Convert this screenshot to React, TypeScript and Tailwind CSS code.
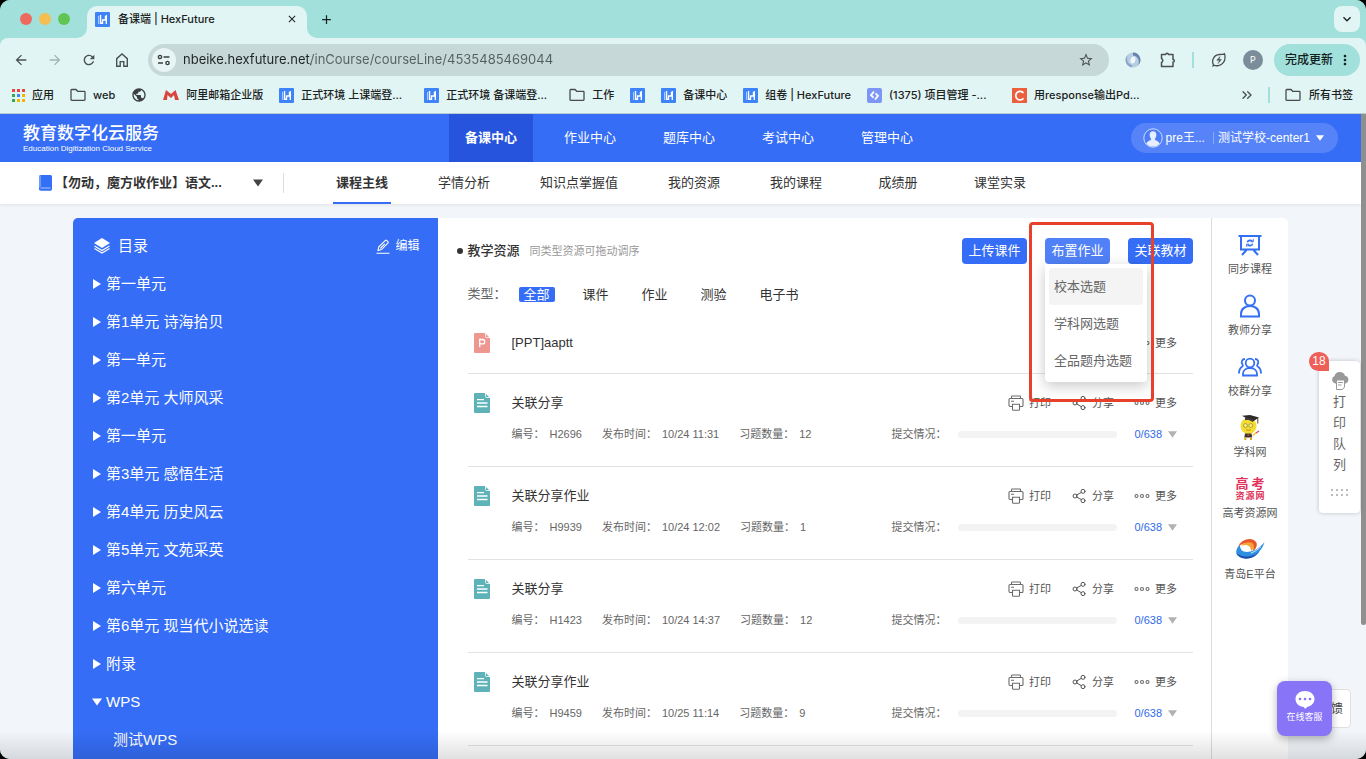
import React from 'react'
import { ChevronsRight, Share2 } from 'lucide-react'
import { MdAdd, MdArrowBack, MdArrowForward, MdClose, MdKeyboardArrowDown, MdMoreVert, MdPublic, MdRefresh, MdStarBorder } from 'react-icons/md'
import { clsx } from 'clsx'

const UI_FONT = "font-['Inter','Noto_Sans_CJK_SC',sans-serif]"
const PAGE_FONT = "font-['Liberation_Sans','Noto_Sans_CJK_SC',sans-serif]"

interface Bookmark {
  label?: string
  icon: React.ReactNode
  name?: string
  wide?: boolean
}

interface Chapter {
  title: string
  open?: boolean
  child?: boolean
}

interface Homework {
  title: string
  code: string
  time: string
  count: number
  done: number
  total: number
}

/* ---------- icons ---------- */

const HexIcon = () => (
  <svg viewBox="0 0 15 15" className="size-[15px] shrink-0">
    <rect width="15" height="15" rx="1" fill="#3f83f8" />
    <path d="M3.500 4v8" stroke="#a9cbff" strokeWidth="1" />
    <path d="M5.500 3v9M5 11.300h2.500V8h3V4M11.300 3v9" stroke="#fff" strokeWidth="1.400" fill="none" />
  </svg>
)

const AppsIcon = () => {
  const colors = ['#e8453c', '#e8453c', '#e8453c', '#34a853', '#4285f4', '#f4b400', '#34a853', '#f4b400', '#f4b400']
  return (
    <svg viewBox="0 0 13 13" className="size-[13px] shrink-0">
      {colors.map((c, i) => (
        <rect key={i} x={(i % 3) * 5} y={Math.floor(i / 3) * 5} width="3" height="3" fill={c} />
      ))}
    </svg>
  )
}

const MailIcon = () => (
  <svg viewBox="0 0 16 12" className="h-3 w-4 shrink-0">
    <path d="M0 11L3 1l5 4 4.500-4L16 11h-4l-1-5-3 3-3.500-3L4 11z" fill="#d9453c" />
  </svg>
)

const CodeIcon = () => (
  <svg viewBox="0 0 15 15" className="size-[15px] shrink-0">
    <rect width="15" height="15" rx="2" fill="#7d96f5" />
    <path d="M7 3.500L4 7.200l2.500 2.500M8 11.500l3-3.700-2.500-2.500" stroke="#fff" strokeWidth="1.8" fill="none" />
  </svg>
)

const CIcon = () => (
  <svg viewBox="0 0 15 15" className="size-[15px] shrink-0">
    <rect width="15" height="15" fill="#ec5f3d" />
    <path d="M11.500 5A4.300 4.300 0 1 0 11.500 10.200" stroke="#fff" strokeWidth="1.700" fill="none" />
  </svg>
)

const FolderIcon = () => (
  <svg viewBox="0 0 16 14" className="h-[14px] w-4 shrink-0" fill="none" stroke="#474b4b" strokeWidth="1.300">
    <path d="M1 2.200a.7.7 0 0 1 .7-.7h4.300l1.700 1.800h6.600a.7.7 0 0 1 .7.7v7.600a.7.7 0 0 1-.7.7H1.700a.7.7 0 0 1-.7-.7z" />
  </svg>
)

const HomeIcon = () => (
  <svg viewBox="0 0 14 14" className="size-[14px]" fill="none" stroke="currentColor" strokeWidth="1.400">
    <path d="M1.700 13.200V5.600L7 1l5.300 4.600v7.600H8.800V8.600H5.200v4.600z" />
  </svg>
)

const TuneIcon = () => (
  <svg viewBox="0 0 14 12" className="h-3 w-[14px]" fill="none" stroke="#3b3f3f" strokeWidth="1.400">
    <circle cx="3" cy="3" r="1.600" />
    <path d="M6.500 3h6M1 9h5" />
    <circle cx="10.500" cy="9" r="1.600" />
  </svg>
)

const PuzzleIcon = () => (
  <svg viewBox="0 0 16 16" className="size-4" fill="none" stroke="#4b5050" strokeWidth="1.500">
    <path d="M1.500 2.500h4.300a1.300 1.300 0 0 1 2.600 0h4.600v5a1.300 1.300 0 0 1 0 2.600v4.400H1.500v-4a2.200 2.200 0 0 0 0-4z" strokeLinejoin="round" />
  </svg>
)

const SaverIcon = () => (
  <svg viewBox="0 0 16 16" className="size-4" fill="none" stroke="#4b5050" strokeWidth="1.300">
    <path d="M2.800 13.200C.2 9.500 2 3 8.500 2.500c2 0 3.500 0 5-.8.8 3 .8 6.500-1.200 9-2.500 3.300-7 3.500-9.500 2.500zL1.500 14.500" />
    <path d="M9 4.500L5.800 8.300h2.700L7 11.500l3.500-4H8z" fill="#4b5050" strokeWidth=".5" />
  </svg>
)

const SwirlIcon = () => (
  <svg viewBox="0 0 16 16" className="size-4">
    <circle cx="8" cy="8" r="7.500" fill="#b9cde2" />
    <path d="M8 .5a7.500 7.500 0 0 1 5 13c2-4 1-9-5-10z" fill="#6583ae" />
    <path d="M7 15.500A7.500 7.500 0 0 1 2.500 3C1 8 3 12 7 13z" fill="#88a6cb" />
    <ellipse cx="8" cy="8" rx="2.400" ry="3.600" fill="#eff7fa" transform="rotate(15 8 8)" />
  </svg>
)

const LayersIcon = () => (
  <svg viewBox="0 0 16 16" className="size-4">
    <path d="M8 0l8 5-8 5-8-5z" fill="#fff" />
    <path d="M.5 8L8 12.500 15.500 8M.5 10.500L8 15l7.500-4.500" stroke="#fff" strokeWidth="1.100" fill="none" />
  </svg>
)

const EditIcon = () => (
  <svg viewBox="0 0 14 15" className="h-[15px] w-[14px]" fill="none" stroke="#fff" strokeWidth="1.100">
    <path d="M2 11.500l.8-3.600 6.700-6.600a.8.8 0 0 1 1.100 0l1.500 1.500a.8.8 0 0 1 0 1.100L5.500 10.600zM4.300 9.300l4.500-4.500M.5 14.200h13" />
  </svg>
)

const Triangle = ({ down, className }: { down?: boolean; className?: string }) => (
  <svg viewBox="0 0 10 10" className={clsx('shrink-0', className)} fill="currentColor">
    <path d={down ? 'M0 1.500h10L5 8.500z' : 'M1 0v10l8-5z'} />
  </svg>
)

const FileIcon = ({ kind }: { kind: 'ppt' | 'doc' }) => (
  <svg viewBox="0 0 16 20" className="h-5 w-4 shrink-0">
    <path d="M1 0h10l5 5v14a1 1 0 0 1-1 1H1a1 1 0 0 1-1-1V1a1 1 0 0 1 1-1z" fill={kind === 'ppt' ? '#ee9791' : '#5db3b8'} />
    <path d="M11.500 0v3.500a1 1 0 0 0 1 1H16" stroke="#fff" strokeWidth=".8" fill="none" />
    {kind === 'ppt' ? (
      <path d="M5.700 14V6.500h2.800a2.200 2.200 0 0 1 0 4.400H5.700" stroke="#fff" strokeWidth="1.300" fill="none" />
    ) : (
      <path d="M3 6.700h7M3 10h10.500M3 13.500h10.500" stroke="#fff" strokeWidth="1.300" />
    )}
  </svg>
)

const PrintIcon = () => (
  <svg viewBox="0 0 16 16" className="size-4" fill="none" stroke="#6b6b6b" strokeWidth="1.100">
    <path d="M3.500 3.500V1.800a.8.8 0 0 1 .8-.8h7.400a.8.8 0 0 1 .8.8v1.700M4.500 11.500H2a1 1 0 0 1-1-1V4.500a1 1 0 0 1 1-1h12a1 1 0 0 1 1 1v6a1 1 0 0 1-1 1h-2.500M3 6.200h3" />
    <path d="M4.500 9.200h7v5.300a.8.8 0 0 1-.8.8H5.300a.8.8 0 0 1-.8-.8z" />
  </svg>
)

const DotsIcon = () => (
  <svg viewBox="0 0 16 6" className="h-[6px] w-4" fill="none" stroke="#6b6b6b" strokeWidth="1.100">
    <circle cx="2.500" cy="3" r="1.500" />
    <circle cx="8" cy="3" r="1.500" />
    <circle cx="13.500" cy="3" r="1.500" />
  </svg>
)

const BoardIcon = () => (
  <svg viewBox="0 0 24 22" className="h-[22px] w-6" fill="none" stroke="#3370f5" strokeWidth="2">
    <path d="M.5 2h23M3 2v13.500h18V2M8.500 16l-4.500 5M15.500 16l4.500 5" />
    <path d="M9.300 8.300a3 3 0 0 1 5-1M14.700 9.700a3 3 0 0 1-5 1" strokeWidth="1.600" />
    <path d="M15.300 5.200v2.600h-2.600M8.700 12.800v-2.600h2.600" strokeWidth="1" />
  </svg>
)

const PersonIcon = () => (
  <svg viewBox="0 0 22 24" className="h-6 w-[22px]" fill="none" stroke="#3370f5" strokeWidth="2">
    <circle cx="11" cy="6.500" r="5" />
    <path d="M2 22.500V20c0-5 4-8 9-8s9 3 9 8v2.500z" />
  </svg>
)

const GroupIcon = () => (
  <svg viewBox="0 0 24 20" className="h-5 w-6" fill="none" stroke="#3370f5" strokeWidth="1.800">
    <circle cx="12" cy="6" r="4.300" />
    <path d="M5 18.500v-1.700c0-3.500 3-5.800 7-5.800s7 2.300 7 5.800v1.700z" />
    <path d="M7 2C4 2 2.800 5 4.500 7.500c.8 1 .3 1.800-.5 2.300C2 11 1 13 1 16.500M17 2c3 0 4.200 3 2.500 5.500-.8 1-.3 1.800.5 2.300 2 1.200 3 3.200 3 6.700" />
  </svg>
)

const MascotIcon = () => (
  <svg viewBox="0 0 22 26" className="h-[26px] w-[22px]">
    <circle cx="9.500" cy="11" r="8" fill="#f6dc32" />
    <path d="M3 .800L11 0l9 2.500-6.500 4.200z" fill="#2e2a2a" />
    <path d="M6 2.500v2.800c2.500-.6 5.500-.2 8 1.400V4z" fill="#413b3b" />
    <path d="M18.800 3V8.500" stroke="#55431f" />
    <g fill="#f9ea7f" stroke="#8d8a2e" strokeWidth=".7">
      <circle cx="6.500" cy="10.500" r="2" />
      <circle cx="11.800" cy="10.500" r="2" />
    </g>
    <path d="M7 14.500c1.500 1 3.500 1 5 0" stroke="#a8811a" fill="none" strokeWidth=".8" />
    <path d="M6 18.500h6.500l.7 4H5.300z" fill="#3a3432" />
    <path d="M9.300 18.500l-1.500 2h3z" fill="#d94b2b" />
    <path d="M6.300 22.500V25M12 22.500V25" stroke="#dba91c" strokeWidth="2" />
    <path d="M13.500 20.500l4-3" stroke="#e8c328" strokeWidth="1.300" />
    <path d="M17 18l3-2" stroke="#d94a58" strokeWidth="1.300" />
  </svg>
)

const QingdaoIcon = () => (
  <svg viewBox="0 0 30 24" className="h-6 w-[30px]">
    <path d="M3 9C6 1 17-1.500 21 4c2 3 0 7-3 9 1-4 0-7.500-4-8C10 4.500 6 6 3 9z" fill="#e8562a" />
    <path d="M6 7.500c4-4 11-4 12.500-1 1 2.500-.5 5.500-2.500 6.500 0-3-1-5-4-5.800-2-.4-4 0-6 .3z" fill="#f6a636" />
    <path d="M9 8.500c3-1 6 .5 6 4.500-2 1-4.500 1-6 0-1-1-1-3 0-4.500z" fill="#fff" />
    <path d="M5 7C1 10 0 15 3 18c5 4 14 3 20-3 3-3 5.500-7 6.500-11-3 4-8 8-14 9.500C9 15 5 13 5 7z" fill="#2f8fe0" />
    <path d="M1.500 15c3 7 16 8.500 23-1.500C18 19.500 8 20.500 1.500 15z" fill="#1c4fae" />
    <path d="M16 15c4-1.500 7-3.500 10-6.500" stroke="#fff" strokeWidth=".8" fill="none" />
  </svg>
)

const CloudPrintIcon = () => (
  <svg viewBox="0 0 18 18" className="size-[18px]">
    <path d="M4 11.500A4 4 0 0 1 3.500 4 5.500 5.500 0 0 1 14 3.800a4 4 0 0 1 .8 7.700z" fill="#999" />
    <path d="M5.500 8h8v7l-2 2.500h-6z" fill="#fff" stroke="#999" />
    <path d="M7 10.500h5M7 13h3.500" stroke="#999" />
  </svg>
)

const AvatarIcon = () => (
  <svg viewBox="0 0 20 20" className="size-5 shrink-0">
    <circle cx="10" cy="10" r="9.200" fill="#4c7cf6" stroke="#dbe6ff" strokeWidth=".9" />
    <path d="M10 3.200c2.600 0 3.600 2 3.300 4.500-.2 1.500-1 2.700-1.600 3.300.2 1.700 4 1.700 5 4.700A9.200 9.200 0 0 1 3.300 15.700c1-3 4.800-3 5-4.700-.6-.6-1.400-1.800-1.600-3.300-.3-2.500.7-4.500 3.300-4.500z" fill="#e7efff" />
  </svg>
)

/* ---------- data ---------- */

const bookmarks: Bookmark[] = [
  { label: '应用', icon: <AppsIcon /> },
  { label: 'web', icon: <FolderIcon /> },
  { name: '网站', icon: <MdPublic className="size-4 text-[#3b3f3f]" /> },
  { label: '阿里邮箱企业版', icon: <MailIcon /> },
  { label: '正式环境 上课端登...', icon: <HexIcon />, wide: true },
  { label: '正式环境 备课端登...', icon: <HexIcon />, wide: true },
  { label: '工作', icon: <FolderIcon /> },
  { name: 'HexFuture', icon: <HexIcon /> },
  { label: '备课中心', icon: <HexIcon /> },
  { label: '组卷 | HexFuture', icon: <HexIcon /> },
  { label: '(1375) 项目管理 -...', icon: <CodeIcon />, wide: true },
  { label: '用response输出Pd...', icon: <CIcon />, wide: true }
]

const mainNav = ['备课中心', '作业中心', '题库中心', '考试中心', '管理中心']
const subNav = ['课程主线', '学情分析', '知识点掌握值', '我的资源', '我的课程', '成绩册', '课堂实录']
const types = ['全部', '课件', '作业', '测验', '电子书']
const assignOptions = ['校本选题', '学科网选题', '全品题舟选题']

const chapters: Chapter[] = [
  { title: '第一单元' },
  { title: '第1单元 诗海拾贝' },
  { title: '第一单元' },
  { title: '第2单元 大师风采' },
  { title: '第一单元' },
  { title: '第3单元 感悟生活' },
  { title: '第4单元 历史风云' },
  { title: '第5单元 文苑采英' },
  { title: '第六单元' },
  { title: '第6单元 现当代小说选读' },
  { title: '附录' },
  { title: 'WPS', open: true },
  { title: '测试WPS', child: true }
]

const homeworks: Homework[] = [
  { title: '关联分享', code: 'H2696', time: '10/24 11:31', count: 12, done: 0, total: 638 },
  { title: '关联分享作业', code: 'H9939', time: '10/24 12:02', count: 1, done: 0, total: 638 },
  { title: '关联分享', code: 'H1423', time: '10/24 14:37', count: 12, done: 0, total: 638 },
  { title: '关联分享作业', code: 'H9459', time: '10/25 11:14', count: 9, done: 0, total: 638 }
]

const GaokaoLogo = () => (
  <span className="flex flex-col items-center font-bold text-[#e0325a]">
    <span className="flex gap-[3px] text-[13px] leading-[14px]">
      <span>高</span>
      <span>考</span>
    </span>
    <span className="flex gap-px text-[9px] leading-[11px]">
      <span>资</span>
      <span>源</span>
      <span>网</span>
    </span>
  </span>
)

const tools = [
  { label: '同步课程', icon: <BoardIcon /> },
  { label: '教师分享', icon: <PersonIcon /> },
  { label: '校群分享', icon: <GroupIcon /> },
  { label: '学科网', icon: <MascotIcon /> },
  { label: '高考资源网', icon: <GaokaoLogo /> },
  { label: '青岛E平台', icon: <QingdaoIcon /> }
]

/* ---------- browser window ---------- */

const TabStrip = () => (
  <div className="flex h-[38px] shrink-0 items-end bg-[#a2e0dc] pr-[6px]">
    <div className="flex w-[77px] shrink-0 items-center gap-[7px] self-center pl-5">
      <span className="size-3 rounded-full bg-[#ed6a5e]" />
      <span className="size-3 rounded-full bg-[#f5bf4f]" />
      <span className="size-3 rounded-full bg-[#61c554]" />
    </div>
    <svg viewBox="0 0 10 10" className="size-[10px] shrink-0">
      <path d="M10 0v10H0A10 10 0 0 0 10 0z" fill="#e1f5f4" />
    </svg>
    <div className="flex h-8 w-[220px] shrink-0 items-center rounded-t-[10px] bg-[#e1f5f4] pr-[9px] pb-[6px] pl-2">
      <HexIcon />
      <span className="ml-2 flex-1 truncate text-[11px] font-medium">备课端 | HexFuture</span>
      <button aria-label="关闭标签页">
        <MdClose className="size-3" />
      </button>
    </div>
    <svg viewBox="0 0 10 10" className="size-[10px] shrink-0">
      <path d="M0 0v10h10A10 10 0 0 1 0 0z" fill="#e1f5f4" />
    </svg>
    <button aria-label="新标签页" className="ml-[2px] self-center">
      <MdAdd className="size-[15px]" />
    </button>
    <button aria-label="搜索标签页" className="ml-auto flex size-[26px] items-center justify-center self-center rounded-lg bg-[#e1f5f4]">
      <MdKeyboardArrowDown className="size-4" />
    </button>
  </div>
)

const Toolbar = () => (
  <div className="flex h-11 shrink-0 items-center pr-[6px] pl-[13px] text-[#4b5050]">
    <div className="flex w-[135px] shrink-0 items-center gap-[18px]">
      <button aria-label="后退"><MdArrowBack className="size-4" /></button>
      <button aria-label="前进"><MdArrowForward className="size-4 text-[#a3b3b2]" /></button>
      <button aria-label="刷新"><MdRefresh className="size-4" /></button>
      <button aria-label="主页"><HomeIcon /></button>
    </div>
    <div className="flex h-8 flex-1 items-center rounded-full bg-[#c6d8d7] pr-[15px] pl-1">
      <span className="flex size-6 shrink-0 items-center justify-center rounded-full bg-[#e7f5f4]">
        <TuneIcon />
      </span>
      <input
        aria-label="地址"
        readOnly
        value="nbeike.hexfuture.net/inCourse/courseLine/4535485469044"
        className="ml-[7px] min-w-0 flex-1 bg-linear-to-r from-[#1f2424] from-[128px] to-[#535f5e] to-[128px] bg-clip-text text-[13px] text-transparent outline-none"
      />
      <button aria-label="收藏"><MdStarBorder className="size-4" /></button>
    </div>
    <div className="ml-4 flex items-center gap-[19px]">
      <SwirlIcon />
      <PuzzleIcon />
    </div>
    <span className="mr-[17px] ml-4 h-4 w-[2px] bg-[#a2e0dc]" />
    <SaverIcon />
    <span className="ml-4 flex size-5 items-center justify-center rounded-full bg-[#7b8d9a] text-[9px] text-white">P</span>
    <button className="ml-[11px] flex h-8 items-center rounded-full bg-[#a2e0dc] pr-[7px] pl-[11px] text-[12px] font-medium text-[#122020]">
      完成更新
      <MdMoreVert className="ml-1 size-4" />
    </button>
  </div>
)

const BookmarkBar = () => (
  <nav aria-label="书签" className="flex h-8 shrink-0 items-center border-b border-[#b9cbd0] pr-[13px] pb-[5px] pl-3 text-[11px] font-medium text-[#1c2222]">
    <div className="flex flex-1 items-center gap-4 overflow-hidden whitespace-nowrap">
      {bookmarks.map((b, i) => (
        <a key={i} href="#" aria-label={b.name} className="flex shrink-0 items-center gap-[7px]">
          {b.icon}
          {b.label && <span className={clsx(b.wide && 'w-[107px]')}>{b.label}</span>}
        </a>
      ))}
    </div>
    <button aria-label="更多书签" className="text-[#4b5050]">
      <ChevronsRight className="size-4" strokeWidth={2} />
    </button>
    <span className="mr-[15px] ml-[13px] h-4 w-[2px] bg-[#a2e0dc]" />
    <a href="#" className="flex items-center gap-2">
      <FolderIcon />
      所有书签
    </a>
  </nav>
)

/* ---------- page ---------- */

const Header = () => (
  <header className="flex h-12 shrink-0 bg-[#356df6] pr-[23px] pl-[23px] text-white">
    <div className="flex w-[426px] shrink-0 flex-col justify-center">
      <span className="text-[17px] leading-5 font-medium">教育数字化云服务</span>
      <span className="text-[8px] leading-[9px]">Education Digitization Cloud Service</span>
    </div>
    <nav className="flex gap-[15px]">
      {mainNav.map((n, i) => (
        <a key={n} href="#" className={clsx('flex w-[84px] items-center justify-center text-[13px]', i === 0 && 'bg-[#2654dc] font-bold')}>
          {n}
        </a>
      ))}
    </nav>
    <button className="ml-auto flex h-[30px] items-center self-center rounded-full bg-[#5684f8] pr-[14px] pl-3 text-[12px]">
      <AvatarIcon />
      <span className="ml-[3px]">pre王...</span>
      <span className="mr-1 ml-2 h-3 w-px bg-[#86a7fa]" />
      测试学校-center1
      <Triangle down className="ml-[6px] size-2" />
    </button>
  </header>
)

const SubNav = () => (
  <div className="flex h-[42px] shrink-0 items-center bg-white pl-[38px] text-[13px] text-[#333] shadow-[0_1px_3px_rgba(0,0,0,0.08)]">
    <button className="flex w-[246px] shrink-0 items-center border-r border-[#dcdcdc] font-bold">
      <svg viewBox="0 0 14 16" className="h-4 w-[14px] shrink-0">
        <rect x="1" width="13" height="15.500" rx="1.500" fill="#3370f5" />
        <path d="M2 .5v11.500M1.500 13h11" stroke="#a9c4ff" strokeWidth="1" />
        <path d="M2.500 12.500A1.500 1.500 0 0 0 2.500 15H13" stroke="#3370f5" fill="none" />
      </svg>
      <span className="ml-[3px] w-[180px] truncate text-left">【勿动，魔方收作业】语文...</span>
      <Triangle down className="ml-[18px] size-[10px] text-[#444]" />
    </button>
    <nav className="ml-[27px] flex h-full">
      {subNav.map((n, i) => (
        <a key={n} href="#" className="flex min-w-[102px] justify-center px-[22px]">
          <span className={clsx('flex items-center px-[3px] whitespace-nowrap', i === 0 && 'border-b-2 border-[#356df6] pt-[2px] font-bold')}>{n}</span>
        </a>
      ))}
    </nav>
  </div>
)

const Catalog = () => (
  <aside className="w-[30%] shrink-0 rounded-tl-[5px] bg-[#356df6] pt-[9px] text-[15px] text-white">
    <div className="flex h-[38px] items-center pr-[18px] pl-[21px]">
      <LayersIcon />
      <h2 className="ml-2">目录</h2>
      <button className="ml-auto flex items-center gap-[5px] text-[12px]">
        <EditIcon />
        编辑
      </button>
    </div>
    <ul>
      {chapters.map((c, i) => (
        <li key={i}>
          <button className={clsx('flex h-[38px] w-full items-center gap-1', c.child ? 'pl-10' : 'pl-[19px]')}>
            {!c.child && <Triangle down={c.open} className="size-[10px]" />}
            {c.title}
          </button>
        </li>
      ))}
    </ul>
  </aside>
)

const RowAction = ({ icon, label }: { icon: React.ReactNode; label: string }) => (
  <button className="flex items-center gap-[5px]">
    {icon}
    {label}
  </button>
)

const RowActions = () => (
  <div className="ml-auto flex items-center gap-5 pr-4 text-[11px] text-[#555]">
    <RowAction icon={<PrintIcon />} label="打印" />
    <RowAction icon={<Share2 className="size-4" strokeWidth={1.5} />} label="分享" />
    <RowAction icon={<DotsIcon />} label="更多" />
  </div>
)

const HomeworkRow = ({ item }: { item: Homework }) => (
  <li className="border-b border-[#e2e2e2] pt-[19px] pb-[22px]">
    <div className="flex h-5 items-center pl-[6px]">
      <FileIcon kind="doc" />
      <h3 className="ml-[22px] text-[13px]">{item.title}</h3>
      <RowActions />
    </div>
    <div className="mt-[11px] flex h-5 items-center gap-5 pr-4 pl-11 text-[11px] text-[#666]">
      <span className="flex gap-[5px]"><span>编号：</span>{item.code}</span>
      <span className="flex gap-[5px]"><span>发布时间：</span>{item.time}</span>
      <span className="flex gap-[5px]"><span>习题数量：</span>{item.count}</span>
      <div className="ml-auto flex items-center">
        提交情况：
        <div className="ml-3 h-[7px] w-[159px] overflow-hidden rounded-full bg-[#f3f3f3]">
          <div className="h-full bg-[#356df6]" style={{ width: `${(item.done / item.total) * 100}%` }} />
        </div>
        <span className="ml-[17px] text-[#3069e8]">{item.done}/{item.total}</span>
        <Triangle down className="ml-[6px] size-[9px] text-[#b2b2b2]" />
      </div>
    </div>
  </li>
)

const AssignMenu = ({ type, onSelect }: { type: number; onSelect: (i: number) => void }) => (
  <div className="relative">
    <button className="h-[26px] w-[65px] rounded bg-[#5081f6]">布置作业</button>
    <div role="menu" className="absolute top-full left-0 z-10 w-[102px] rounded-b bg-white p-1 pb-[3px] text-[#666] shadow-[0_4px_14px_rgba(0,0,0,0.22)]">
      {assignOptions.map((o, i) => (
        <button
          key={o}
          role="menuitem"
          onClick={() => onSelect(i)}
          className={clsx('block h-[37px] w-full rounded pl-[5px] text-left whitespace-nowrap', i === type && 'bg-[#f4f4f4]')}
        >
          {o}
        </button>
      ))}
    </div>
    {/* 标注框 */}
    <div className="pointer-events-none absolute -top-4 -left-4 z-20 h-[180px] w-[125px] rounded border-3 border-[#e8412b]" />
  </div>
)

const Resources = () => {
  const [type, setType] = React.useState(0)
  const [option, setOption] = React.useState(0)

  return (
    <main className="min-w-0 flex-1 bg-white pt-5 pr-[18px] pl-[19px] text-[#333]">
      <div className="flex h-[26px] items-center">
        <span className="mr-[5px] size-[6px] rounded-full bg-[#333]" />
        <h2 className="text-[13px] font-medium">教学资源</h2>
        <span className="ml-[10px] text-[11px] text-[#999]">同类型资源可拖动调序</span>
        <div className="ml-auto flex gap-[18px] text-[13px] text-white">
          <button className="h-[26px] w-[65px] rounded bg-[#356df6]">上传课件</button>
          <AssignMenu type={option} onSelect={setOption} />
          <button className="h-[26px] w-[65px] rounded bg-[#356df6]">关联教材</button>
        </div>
      </div>
      <div className="mt-5 flex h-5 items-center pl-[11px] text-[13px]">
        <span className="w-[51px] text-[#666]">类型：</span>
        <div className="flex gap-[23px]">
          {types.map((t, i) => (
            <button key={t} onClick={() => setType(i)} className={clsx('rounded-xs px-[5px] leading-[15px]', i === type && 'bg-[#356df6] text-white')}>
              {t}
            </button>
          ))}
        </div>
      </div>
      <ul className="mt-[29px] ml-[11px]">
        <li className="flex items-center border-b border-[#e2e2e2] pb-5 pl-[6px]">
          <FileIcon kind="ppt" />
          <h3 className="ml-[22px] text-[13px] leading-5">[PPT]aaptt</h3>
          <div className="ml-auto pr-4 text-[11px] text-[#555]">
            <RowAction icon={<DotsIcon />} label="更多" />
          </div>
        </li>
        {homeworks.map(h => (
          <HomeworkRow key={h.code} item={h} />
        ))}
      </ul>
    </main>
  )
}

const ToolColumn = () => (
  <aside className="w-[77px] shrink-0 rounded-tr-[5px] border-l border-[#dcdcdc] bg-white pt-[13px] text-[11px] text-[#555]">
    {tools.map(t => (
      <a key={t.label} href="#" className="mb-[15px] flex flex-col items-center gap-[2px]">
        <span className="flex h-7 items-center">{t.icon}</span>
        <span className="leading-4">{t.label}</span>
      </a>
    ))}
  </aside>
)

const PrintQueue = () => (
  <button className="absolute top-[247px] right-[6px] z-20 flex w-[41px] flex-col items-center rounded bg-white pt-[11px] pb-[16px] text-[13px] leading-[21px] text-[#666] shadow-[0_0_4px_rgba(0,0,0,0.22)]">
    <span className="absolute -top-[9px] -left-[10px] flex h-[19px] w-[20px] items-center justify-center rounded-full rounded-br-none bg-[#ee5f57] text-[12px] text-white">18</span>
    <CloudPrintIcon />
    <span className="mt-px">打</span>
    <span>印</span>
    <span>队</span>
    <span>列</span>
    <svg viewBox="0 0 18 8" className="mt-[14px] h-2 w-[18px]" fill="#bbb">
      {[0, 5, 10, 15].map(x => (
        <path key={x} d={`M${x} 0h2v2h-2zM${x} 5h2v2h-2z`} />
      ))}
    </svg>
  </button>
)

const Support = () => (
  <div className="absolute right-[15px] bottom-[23px] z-20 flex items-center">
    <button className="relative z-10 flex size-[55px] flex-col items-center rounded-lg bg-[#8874f7] pt-[10px] text-[9px] leading-4 text-white shadow-[0_3px_8px_rgba(0,0,0,0.3)]">
      <svg viewBox="0 0 20 18" className="h-[18px] w-5">
        <path d="M10 0c5.300 0 9.500 3.500 9.500 8 0 4-3 7-7 7.800L10 18l-1-2C4 15.700.5 12.500.5 8 .5 3.500 4.700 0 10 0z" fill="#fff" />
        <g fill="#8874f7">
          <circle cx="5" cy="8" r="1.300" />
          <circle cx="10" cy="8" r="1.300" />
          <circle cx="15" cy="8" r="1.300" />
        </g>
      </svg>
      在线客服
    </button>
    <button className="-ml-6 flex h-[39px] w-[43px] items-center justify-end rounded border border-[#e0e0e0] bg-white pr-[7px] text-[12px] text-[#444]">反馈</button>
  </div>
)

export default function App() {
  return (
    <div className="h-screen bg-black">
      <div className={clsx('flex h-full flex-col overflow-hidden rounded-[10px] bg-[#a2e0dc] text-[#1c2222]', UI_FONT)}>
        <TabStrip />
        <div className="flex shrink-0 flex-col rounded-t-[8px] bg-[#e1f5f4]">
          <Toolbar />
          <BookmarkBar />
        </div>
        <div className={clsx('relative flex min-h-0 flex-1 flex-col bg-[#f2f6fa] pr-[5px]', PAGE_FONT)}>
          <Header />
          <SubNav />
          <div className="mx-[73px] mt-[14px] flex min-h-0 flex-1 overflow-hidden">
            <Catalog />
            <Resources />
            <ToolColumn />
          </div>
          <PrintQueue />
          <Support />
          <div className="pointer-events-none absolute inset-x-0 bottom-0 z-10 h-7 bg-linear-to-b from-transparent to-black/12" />
          <div className="absolute top-0 right-0 h-[511px] w-[5px] rounded-b-full bg-[#8f8f8f]" />
        </div>
      </div>
    </div>
  )
}
